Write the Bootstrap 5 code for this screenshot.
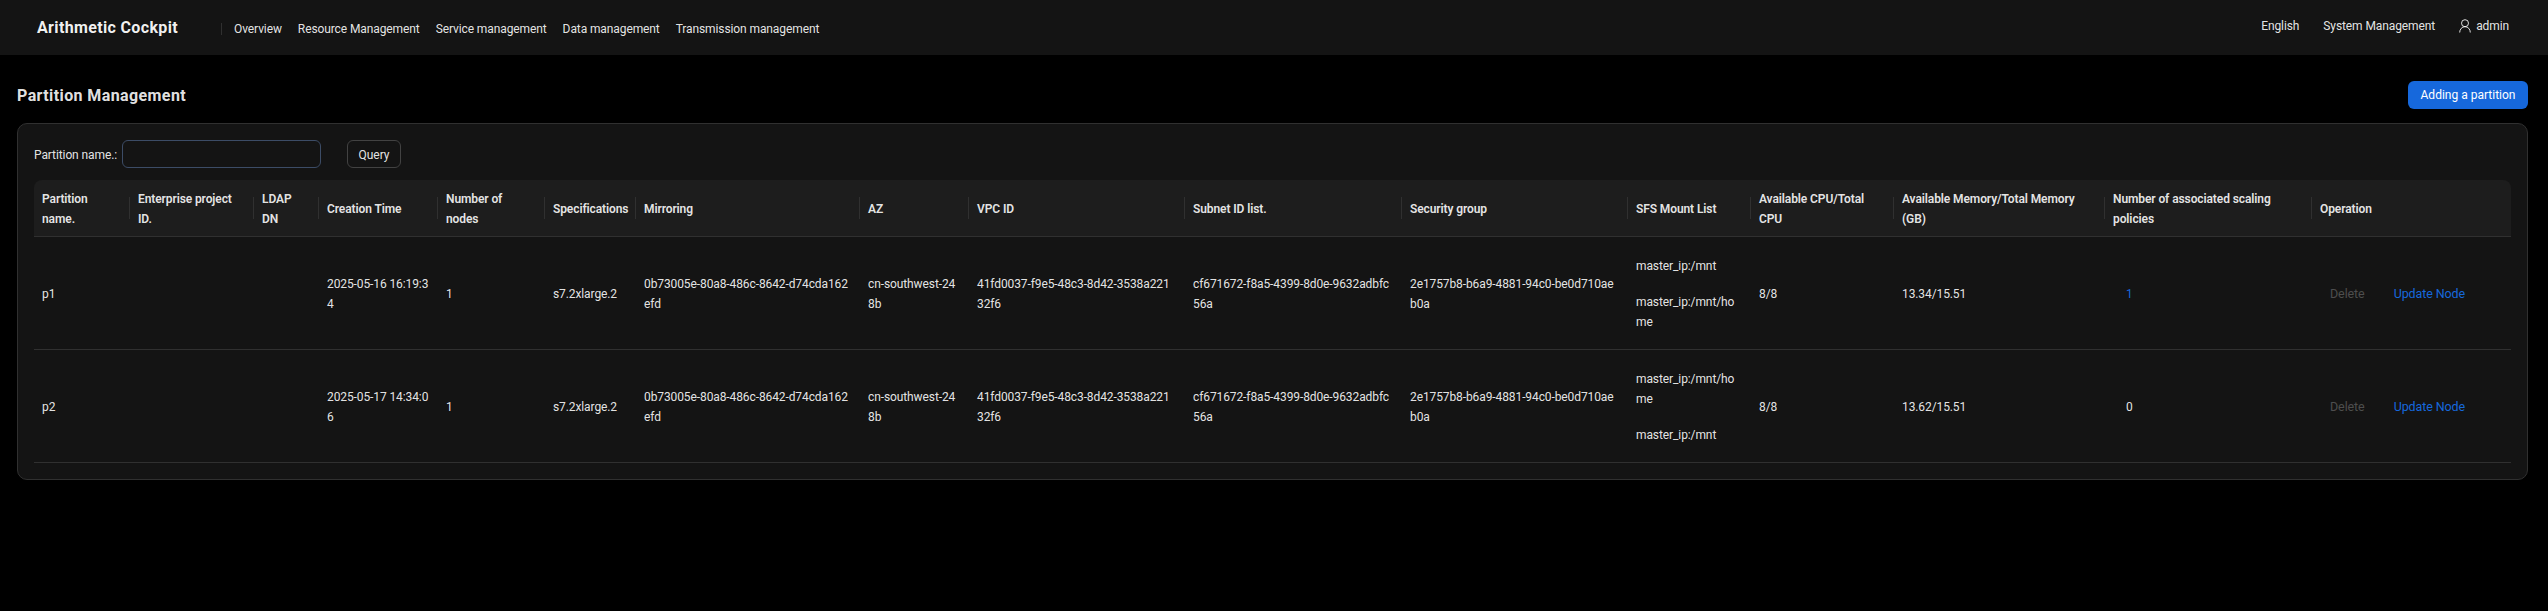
<!DOCTYPE html><html lang="en">
<head>
  <meta charset="UTF-8" />
  <meta name="viewport" content="width=device-width, initial-scale=1.0" />
  <title>Partition Management</title>
  <link rel="stylesheet" href="https://cdn.jsdelivr.net/npm/bootstrap@5.3.0/dist/css/bootstrap.min.css" />
  <style>
    body { background: #000; color: rgba(255,255,255,.9); font-family: Roboto, "Liberation Sans", sans-serif; font-size: 12px; line-height: 20px; letter-spacing: -.1px; }
    .top-nav { background: #141414; height: 55px; padding: 0 39px 0 37px; }
    .brand-name { color: rgba(255,255,255,.95); font-size: 16px; font-weight: 700; line-height: 20px; width: 184px; letter-spacing: .35px; }
    .menu-wrap { border-left: 1px solid #303030; height: 12px; padding-left: 12px; gap: 16px; line-height: 12px; margin-top: 2px; }
    .menu-wrap a, .right-links a { color: rgba(255,255,255,.9); text-decoration: none; }
    .right-links { gap: 24px; margin-top: -3px; }
    .user-link { gap: 5px; }
    .page-wrap { padding: 26px 20px 0 17px; }
    .page-title { font-size: 16px; font-weight: 700; margin: 0; height: 28px; line-height: 29px; letter-spacing: .4px; }
    .add-btn { background: #1668dc; border: 0; color: #fff; font-size: 12px; height: 28px; width: 120px; padding: 0; border-radius: 6px; }
    .panel { background: #141414; border: 1px solid #303030; border-radius: 10px; margin-top: 14px; padding: 16px; }
    .panel-filter { height: 28px; margin-bottom: 12px; }
    .filter-label { width: 88px; padding-top: 2px; }
    .name-input { width: 199px; height: 28px; background: #141414; border: 1px solid #3c4c66; border-radius: 6px; font-size: 12px; }
    .query-btn { background: #141414; border: 1px solid #424242; border-radius: 6px; color: rgba(255,255,255,.9); font-size: 12px; height: 28px; width: 54px; padding: 2px 0 0; margin-left: 26px; }
    .part-table { table-layout: fixed; width: 2477px; margin: 0; border-collapse: separate; border-spacing: 0; --bs-table-bg: transparent; --bs-table-color: rgba(255,255,255,.9); }
    .part-table col:nth-child(1) { width: 96px; }
    .part-table col:nth-child(2) { width: 124px; }
    .part-table col:nth-child(3) { width: 65px; }
    .part-table col:nth-child(4) { width: 119px; }
    .part-table col:nth-child(5) { width: 107px; }
    .part-table col:nth-child(6) { width: 91px; }
    .part-table col:nth-child(7) { width: 224px; }
    .part-table col:nth-child(8) { width: 109px; }
    .part-table col:nth-child(9) { width: 216px; }
    .part-table col:nth-child(10) { width: 217px; }
    .part-table col:nth-child(11) { width: 226px; }
    .part-table col:nth-child(12) { width: 123px; }
    .part-table col:nth-child(13) { width: 143px; }
    .part-table col:nth-child(14) { width: 211px; }
    .part-table col:nth-child(15) { width: 207px; }
    .part-table th, .part-table td { padding: 9px 8px 7px; word-break: break-all; vertical-align: middle; border-bottom: 1px solid #303030; font-size: 12px; line-height: 20px; }
    .part-table th { background: #1d1d1d; font-weight: 600; height: 57px; position: relative; word-break: normal; }
    .part-table th:first-child { border-top-left-radius: 8px; }
    .part-table th:last-child { border-top-right-radius: 8px; }
    .part-table th:not(:last-child)::after { content: ""; position: absolute; top: 17px; bottom: 17px; right: 0; width: 1px; background: #303030; }
    .part-table td { height: 113px; }
    .part-table td.vpc-cell { padding-right: 14px; }
    .time-cell { line-break: anywhere; }
    .mount-line { margin: 0 0 16px; }
    .mount-line:last-child { margin: 0; }
    .cell-link { color: #1668dc; }
    .cell-count { padding-left: 13px; display: inline-block; }
    .cell-off { color: rgba(255,255,255,.25); margin-left: 10px; font-size: 12.5px; }
    .cell-update { margin-left: 29px; font-size: 12.5px; }
  </style>
</head>
<body>
  <nav class="top-nav d-flex align-items-center justify-content-between">
    <div class="d-flex align-items-center">
      <div class="brand-name">Arithmetic Cockpit</div>
      <div class="menu-wrap d-flex align-items-center">
        <a href="#">Overview</a>
        <a href="#">Resource Management</a>
        <a href="#">Service management</a>
        <a href="#">Data management</a>
        <a href="#">Transmission management</a>
      </div>
    </div>
    <div class="right-links d-flex align-items-center">
      <a href="#">English</a>
      <a href="#">System Management</a>
      <a href="#" class="user-link d-flex align-items-center">
        <svg width="12" height="14" viewBox="0 0 12 14" fill="none" stroke="rgba(255,255,255,.85)" stroke-width="1"><circle cx="6" cy="4.2" r="3.5"/><path d="M.7 13.5c0-3.2 2.2-5.8 5.3-5.8s5.300 2.600 5.300 5.800"/></svg>
        <span>admin</span>
      </a>
    </div>
  </nav>

  <main class="page-wrap">
    <div class="d-flex align-items-center justify-content-between">
      <h1 class="page-title">Partition Management</h1>
      <button type="button" class="btn add-btn">Adding a partition</button>
    </div>

    <div class="panel">
      <div class="panel-filter d-flex align-items-center">
        <label for="partName" class="filter-label">Partition name.:</label>
        <input id="partName" class="form-control name-input" type="text" />
        <button type="button" class="btn query-btn">Query</button>
      </div>

      <table class="table part-table">
        <colgroup><col><col><col><col><col><col><col><col><col><col><col><col><col><col><col></colgroup>
        <thead>
          <tr>
            <th>Partition name.</th>
            <th>Enterprise project ID.</th>
            <th>LDAP<br>DN</th>
            <th>Creation Time</th>
            <th>Number of nodes</th>
            <th>Specifications</th>
            <th>Mirroring</th>
            <th>AZ</th>
            <th>VPC ID</th>
            <th>Subnet ID list.</th>
            <th>Security group</th>
            <th>SFS Mount List</th>
            <th>Available CPU/Total CPU</th>
            <th>Available Memory/Total Memory (GB)</th>
            <th>Number of associated scaling policies</th>
            <th>Operation</th>
          </tr>
        </thead>
        <tbody id="partRows"></tbody>
      </table>
    </div>
  </main>

  <script>
    const partitions = [
      { name: 'p1', time: '2025-05-16 16:19:34', mounts: ['master_ip:/mnt', 'master_ip:/mnt/home'], mem: '13.34/15.51', policies: 1 },
      { name: 'p2', time: '2025-05-17 14:34:06', mounts: ['master_ip:/mnt/home', 'master_ip:/mnt'], mem: '13.62/15.51', policies: 0 }
    ];
    document.getElementById('partRows').innerHTML = partitions.map(p => `
      <tr>
        <td>${p.name}</td>
        <td></td>
        <td></td>
        <td class="time-cell">${p.time}</td>
        <td>1</td>
        <td>s7.2xlarge.2</td>
        <td>0b73005e-80a8-486c-8642-d74cda162efd</td>
        <td>cn-southwest-248b</td>
        <td class="vpc-cell">41fd0037-f9e5-48c3-8d42-3538a22132f6</td>
        <td>cf671672-f8a5-4399-8d0e-9632adbfc56a</td>
        <td>2e1757b8-b6a9-4881-94c0-be0d710aeb0a</td>
        <td>${p.mounts.map(m => `<p class="mount-line">${m}</p>`).join('')}</td>
        <td>8/8</td>
        <td>${p.mem}</td>
        <td><span class="cell-count ${p.policies ? 'cell-link' : ''}">${p.policies}</span></td>
        <td><span class="cell-off">Delete</span><span class="cell-link cell-update">Update Node</span></td>
      </tr>`).join('');
  </script>
  <script src="https://cdn.jsdelivr.net/npm/bootstrap@5.3.0/dist/js/bootstrap.bundle.min.js"></script>
</body>
</html>
